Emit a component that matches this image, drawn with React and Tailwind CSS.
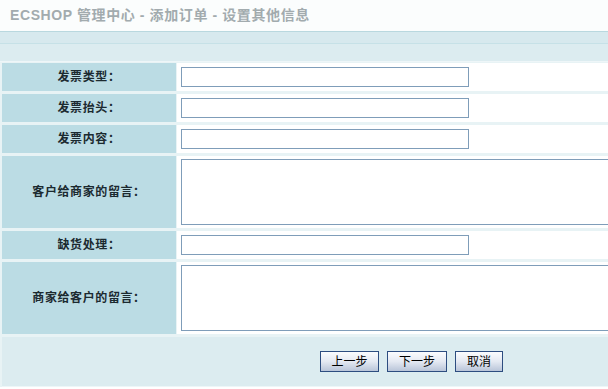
const rows = [
  { label: "发票类型：", type: "input" },
  { label: "发票抬头：", type: "input" },
  { label: "发票内容：", type: "input" },
  { label: "客户给商家的留言：", type: "textarea" },
  { label: "缺货处理：", type: "input" },
  { label: "商家给客户的留言：", type: "textarea" },
];

const Button = ({ children, w }) => (
  <button
    type="button"
    className={`h-[21px] ${w} border border-[#2d4d80] bg-gradient-to-b from-[#fbfcfe] via-[#e4e9f2] to-[#b9c5d9] text-[12px] text-black leading-none`}
  >
    {children}
  </button>
);

const App = () => {
  return (
    <div
      className="w-[608px] h-[389px] overflow-hidden bg-white"
      style={{ fontFamily: '"Liberation Sans", "Noto Sans CJK SC", sans-serif' }}
    >
      <div className="h-[31px] flex items-center px-[10px] bg-[#fbfdfd]">
        <h1 className="text-[14px] font-bold text-[#a2abae] tracking-[0.6px] whitespace-nowrap">
          ECSHOP 管理中心 - 添加订单 - 设置其他信息
        </h1>
      </div>
      <div className="h-[12px] border-t border-[#b9d8df] bg-[#d7e9ee]"></div>
      <div className="h-[19px] border-t border-[#c6e1e7] bg-[#dcecf0] border-b border-b-[#eef6f8]"></div>

      <div className="flex flex-col gap-[3px] bg-[#e8f3f5] pl-[2px] pt-[1px]">
        {rows.map((r) => (
          <div
            key={r.label}
            className={`flex ${r.type === "textarea" ? "h-[72px]" : "h-[28px]"}`}
          >
            <div className="w-[174px] shrink-0 flex items-center justify-center bg-[#bbdce4] text-[12px] font-bold text-[#1b2a30] tracking-[0.6px] whitespace-nowrap">
              {r.label}
            </div>
            <div className="ml-[1px] flex-1 min-w-0 overflow-hidden flex items-center bg-white pl-[4px]">
              {r.type === "input" ? (
                <div className="w-[288px] h-[20px] shrink-0 border border-[#7f9db9] bg-white"></div>
              ) : (
                <div className="w-[500px] h-[66px] shrink-0 border border-[#7f9db9] bg-white"></div>
              )}
            </div>
          </div>
        ))}
        <div className="h-[50px] bg-[#dcecf0] flex items-center pl-[318px] gap-[8px] border-b border-[#eef6f8]">
          <Button w="w-[59px]">上一步</Button>
          <Button w="w-[60px]">下一步</Button>
          <Button w="w-[48px]">取消</Button>
        </div>
      </div>
    </div>
  );
};

export default App;
